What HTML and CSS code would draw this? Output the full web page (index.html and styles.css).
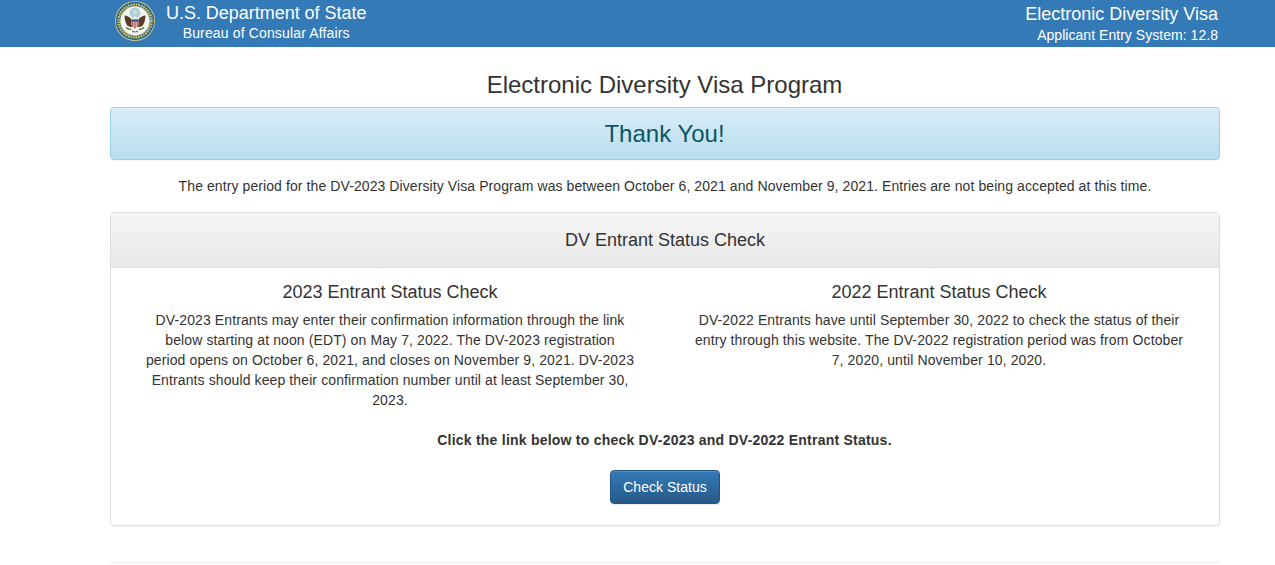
FILE: index.html
```html
<!DOCTYPE html>
<html lang="en">
<head>
  <meta charset="UTF-8">
  <meta name="viewport" content="width=device-width, initial-scale=1.0">
  <title>Electronic Diversity Visa Program</title>
  <link rel="stylesheet" href="styles.css">
</head>
<body>
  <header class="topbar">
    <div class="topbar-inner">
      <div class="brand">
        <svg class="seal" viewBox="0 0 40 40" width="40" height="40" aria-hidden="true">
          <circle cx="20" cy="20" r="20" fill="#c9c48a"/>
          <circle cx="20" cy="20" r="19" fill="#1f5a7c"/>
          <circle cx="20" cy="20" r="16.500" fill="none" stroke="#c4bd78" stroke-width="2.500" stroke-dasharray="1.800 .8"/>
          <circle cx="20" cy="20" r="15" fill="#c9c48a"/>
          <circle cx="20" cy="20" r="14.300" fill="#f6f6f0"/>
          <circle cx="20" cy="12" r="5.500" fill="#a9cfe0"/>
          <path d="M20 8.500l.8 1.700 1.800.2-1.300 1.200.4 1.800-1.700-.9-1.700.9.400-1.800-1.300-1.200 1.800-.2z" fill="#e8e2b0"/>
          <path d="M17 19c-2-3-5-4.500-7.500-4.500.2 4 1 8.500 3.500 10.500 1.500 1 3.500 1.200 4.500.8z" fill="#5a3d24"/>
          <path d="M23 19c2-3 5-4.500 7.500-4.500-.2 4-1 8.500-3.500 10.500-1.500 1-3.500 1.200-4.500.8z" fill="#5a3d24"/>
          <path d="M18.300 16.500c0-1.700 3.400-1.700 3.400 0l-.5 2h-2.400z" fill="#ecebe0"/>
          <path d="M16.500 18.500h7v5c0 2-1.700 3.300-3.500 4.200-1.800-.9-3.500-2.200-3.500-4.200z" fill="#f6f6f0"/>
          <path d="M16.500 18.500h7v2.200h-7z" fill="#2b4a86"/>
          <path d="M17.200 20.700h1.200v5.700l-1.200-1.100zM19.400 20.700h1.200v6.800h-1.200zM21.600 20.700h1.200v4.600l-1.200 1.100z" fill="#b8323c"/>
          <path d="M11 26.500c1.500 1.200 3 1.800 5 2M29 26.500c-1.500 1.200-3 1.800-5 2" stroke="#5c7440" stroke-width="1.500" fill="none"/>
          <path d="M17 29.500l3 1.300 3-1.300-.5 1.800h-5z" fill="#6b4a2c"/>
        </svg>
        <div class="brand-text">
          <div class="brand-title">U.S. Department of State</div>
          <div class="brand-sub">Bureau of Consular Affairs</div>
        </div>
      </div>
      <div class="system">
        <div class="system-title">Electronic Diversity Visa</div>
        <div class="system-sub">Applicant Entry System: 12.8</div>
      </div>
    </div>
  </header>

  <main class="container">
    <h1 class="page-title">Electronic Diversity Visa Program</h1>

    <div class="alert-info">
      <h2>Thank You!</h2>
    </div>

    <p class="notice">The entry period for the DV-2023 Diversity Visa Program was between October 6, 2021 and November 9, 2021. Entries are not being accepted at this time.</p>

    <section class="panel">
      <div class="panel-heading">DV Entrant Status Check</div>
      <div class="panel-body">
        <div class="columns">
          <div class="column">
            <h4>2023 Entrant Status Check</h4>
            <p>DV-2023 Entrants may enter their confirmation information through the link below starting at noon (EDT) on May 7, 2022. The DV-2023 registration period opens on October 6, 2021, and closes on November 9, 2021. DV-2023 Entrants should keep their confirmation number until at least September 30, 2023.</p>
          </div>
          <div class="column">
            <h4>2022 Entrant Status Check</h4>
            <p>DV-2022 Entrants have until September 30, 2022 to check the status of their entry through this website. The DV-2022 registration period was from October 7, 2020, until November 10, 2020.</p>
          </div>
        </div>
        <p class="link-note">Click the link below to check DV-2023 and DV-2022 Entrant Status.</p>
        <div class="actions">
          <a class="btn-primary" href="#">Check Status</a>
        </div>
      </div>
    </section>

    <hr>
  </main>
</body>
</html>
```
FILE: styles.css
```css
* {
  box-sizing: border-box;
}

body {
  margin: 0;
  font-family: "Liberation Sans", Arial, sans-serif;
  font-size: 14px;
  line-height: 20px;
  color: #333;
  background-color: #fff;
  overflow-x: hidden;
}

.topbar {
  height: 47px;
  background-color: #337ab7;
  color: #fff;
}

.topbar-inner {
  display: flex;
  justify-content: space-between;
  width: 1108px;
  margin-left: 110px;
}

.brand {
  display: flex;
  padding: 1px 0 0 5px;
}

.seal {
  flex: none;
}

.brand-text {
  margin-left: 11px;
  text-align: center;
}

.brand-title {
  font-size: 18px;
  line-height: 24px;
  letter-spacing: -.03px;
}

.brand-sub {
  font-size: 14px;
  line-height: 16px;
  letter-spacing: .15px;
}

.system {
  padding-top: 4px;
  text-align: right;
}

.system-title {
  font-size: 18px;
  line-height: 20px;
}

.system-sub {
  margin-top: 1px;
  font-size: 14px;
  line-height: 20px;
  letter-spacing: .04px;
}

.container {
  width: 1110px;
  margin-left: 110px;
}

.page-title {
  margin: 25px 0 9px;
  padding-right: 1px;
  font-size: 24px;
  font-weight: 500;
  line-height: 26px;
  text-align: center;
}

.alert-info {
  height: 53px;
  margin-bottom: 16px;
  padding-right: 1px;
  border: 1px solid #9acfea;
  border-radius: 4px;
  background-image: linear-gradient(to bottom, #d9edf7 0, #b9def0 100%);
  box-shadow: 0 1px 0 rgba(255, 255, 255, .25) inset, 0 1px 2px rgba(0, 0, 0, .05);
  text-align: center;
}

.alert-info h2 {
  margin: 0;
  font-size: 24px;
  font-weight: 500;
  line-height: 51px;
  color: #0b5665;
}

.notice {
  margin: 0 0 16px;
  letter-spacing: .09px;
  text-align: center;
}

.panel {
  border: 1px solid #ddd;
  border-radius: 4px;
  box-shadow: 0 1px 1px rgba(0, 0, 0, .05);
}

.panel-heading {
  height: 55px;
  border-bottom: 1px solid #ddd;
  border-radius: 3px 3px 0 0;
  background-image: linear-gradient(to bottom, #f5f5f5 0, #e8e8e8 100%);
  font-size: 18px;
  line-height: 54px;
  text-align: center;
}

.panel-body {
  padding: 14px 0 21px;
  text-align: center;
}

.columns {
  display: grid;
  grid-template-columns: 491px 491px;
  justify-content: center;
  column-gap: 58px;
  padding-right: 1px;
}

.column h4 {
  margin: 0 0 8px;
  font-size: 18px;
  font-weight: 500;
  line-height: 20px;
}

.column p {
  margin: 0;
  letter-spacing: .11px;
}

.link-note {
  margin: 20px 0 0;
  padding-right: 1px;
  font-weight: bold;
  letter-spacing: .23px;
}

.actions {
  margin-top: 20px;
}

.btn-primary {
  display: inline-block;
  width: 110px;
  padding: 6px 0;
  border: 1px solid #245580;
  border-radius: 4px;
  background-image: linear-gradient(to bottom, #337ab7 0, #265a88 100%);
  color: #fff;
  text-decoration: none;
  letter-spacing: .03px;
  box-shadow: 0 1px 0 rgba(255, 255, 255, .15) inset, 0 1px 1px rgba(0, 0, 0, .075);
}

hr {
  height: 1px;
  margin: 36px 0 0;
  border: 0;
  background-color: #eee;
}
```
